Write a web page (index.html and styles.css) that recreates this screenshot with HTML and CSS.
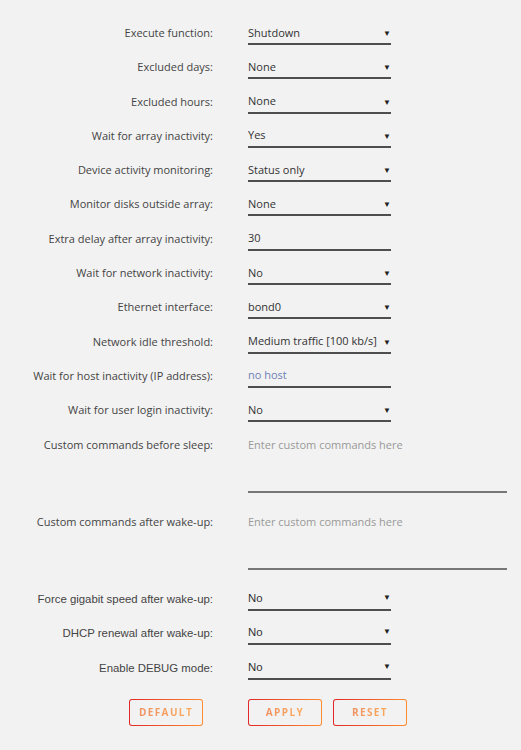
FILE: index.html
```html
<!DOCTYPE html>
<html lang="en">
<head>
  <meta charset="UTF-8">
  <meta name="viewport" content="width=device-width, initial-scale=1.0">
  <title>Sleep Settings</title>
  <link rel="stylesheet" href="styles.css">
</head>
<body>
  <form class="settings">
    <div class="row">
      <label class="title">Execute function:</label>
      <span class="pick"><select><option>Shutdown</option></select></span>
    </div>
    <div class="row">
      <label class="title">Excluded days:</label>
      <span class="pick"><select><option>None</option></select></span>
    </div>
    <div class="row">
      <label class="title">Excluded hours:</label>
      <span class="pick"><select><option>None</option></select></span>
    </div>
    <div class="row">
      <label class="title">Wait for array inactivity:</label>
      <span class="pick"><select><option>Yes</option></select></span>
    </div>
    <div class="row">
      <label class="title">Device activity monitoring:</label>
      <span class="pick"><select><option>Status only</option></select></span>
    </div>
    <div class="row">
      <label class="title">Monitor disks outside array:</label>
      <span class="pick"><select><option>None</option></select></span>
    </div>
    <div class="row">
      <label class="title">Extra delay after array inactivity:</label>
      <input class="text" type="text" value="30">
    </div>
    <div class="row">
      <label class="title">Wait for network inactivity:</label>
      <span class="pick"><select><option>No</option></select></span>
    </div>
    <div class="row">
      <label class="title">Ethernet interface:</label>
      <span class="pick"><select><option>bond0</option></select></span>
    </div>
    <div class="row">
      <label class="title">Network idle threshold:</label>
      <span class="pick"><select><option>Medium traffic [100 kb/s]</option></select></span>
    </div>
    <div class="row">
      <label class="title">Wait for host inactivity (IP address):</label>
      <input class="text host" type="text" placeholder="no host">
    </div>
    <div class="row">
      <label class="title">Wait for user login inactivity:</label>
      <span class="pick"><select><option>No</option></select></span>
    </div>
    <div class="row tall">
      <label class="title">Custom commands before sleep:</label>
      <textarea placeholder="Enter custom commands here"></textarea>
    </div>
    <div class="row tall">
      <label class="title">Custom commands after wake-up:</label>
      <textarea placeholder="Enter custom commands here"></textarea>
    </div>
    <div class="row plain">
      <label class="title">Force gigabit speed after wake-up:</label>
      <span class="pick"><select><option>No</option></select></span>
    </div>
    <div class="row plain">
      <label class="title">DHCP renewal after wake-up:</label>
      <span class="pick"><select><option>No</option></select></span>
    </div>
    <div class="row plain">
      <label class="title">Enable DEBUG mode:</label>
      <span class="pick"><select><option>No</option></select></span>
    </div>

    <div class="actions">
      <div class="title"><button type="button"><span>Default</span></button></div>
      <button type="button"><span>Apply</span></button>
      <button type="button"><span>Reset</span></button>
    </div>
  </form>
</body>
</html>
```

FILE: styles.css
```css
body {
  margin: 0;
  background: #f2f2f2;
  font-family: "Open Sans", "Liberation Sans", sans-serif;
  font-size: 11px;
  color: #444;
}
.settings {
  padding-top: 21px;
}
.row {
  display: flex;
  align-items: flex-start;
  gap: 35px;
  margin-bottom: 10.3px;
}
.title {
  width: 213px;
  flex-shrink: 0;
  text-align: right;
  line-height: 24px;
}
select, input, textarea {
  font: inherit;
  color: #333;
  background: transparent;
  border: none;
  border-bottom: 2px solid #4e4e4e;
  border-radius: 0;
  margin: 0;
  outline: none;
  box-sizing: border-box;
}
.pick {
  position: relative;
  display: block;
  width: 143px;
}
.pick select {
  appearance: none;
  -webkit-appearance: none;
  width: 100%;
  height: 24px;
  padding: 0 12px 0 0;
}
.pick::after {
  content: "\25BC";
  position: absolute;
  right: 0;
  top: 6px;
  font-size: 8px;
  color: #222;
  pointer-events: none;
}
.text {
  width: 143px;
  height: 24px;
  padding: 0;
}
.host::placeholder {
  color: #6f7fb5;
}
.tall {
  margin-bottom: 17px;
}
textarea {
  width: 259px;
  height: 60px;
  padding: 4px 0 0;
  line-height: 16px;
  resize: none;
  border-bottom-color: #777;
}
textarea::placeholder {
  color: #999;
}
.plain {
  font-family: "Liberation Sans", Arial, sans-serif;
  font-size: 11.4px;
  margin-bottom: 10.8px;
}
.tall + .plain {
  margin-top: 6px;
}
.actions {
  display: flex;
  gap: 11px;
  padding-top: 8px;
}
.actions .title {
  margin-right: 24px;
  line-height: normal;
}
button {
  width: 74px;
  height: 27px;
  margin-right: 10px;
  padding: 0;
  border: 1px solid transparent;
  border-radius: 3px;
  background: linear-gradient(#f2f2f2, #f2f2f2) padding-box,
              linear-gradient(90deg, #e22828, #ff8c2f) border-box;
  font-family: "Open Sans", sans-serif;
  font-size: 10px;
  font-weight: bold;
  letter-spacing: 1.4px;
  text-transform: uppercase;
  cursor: pointer;
}
.actions > button {
  margin-right: 0;
}
button span {
  background: linear-gradient(90deg, #f09060, #fbaa5c);
  -webkit-background-clip: text;
  background-clip: text;
  color: transparent;
}
```
